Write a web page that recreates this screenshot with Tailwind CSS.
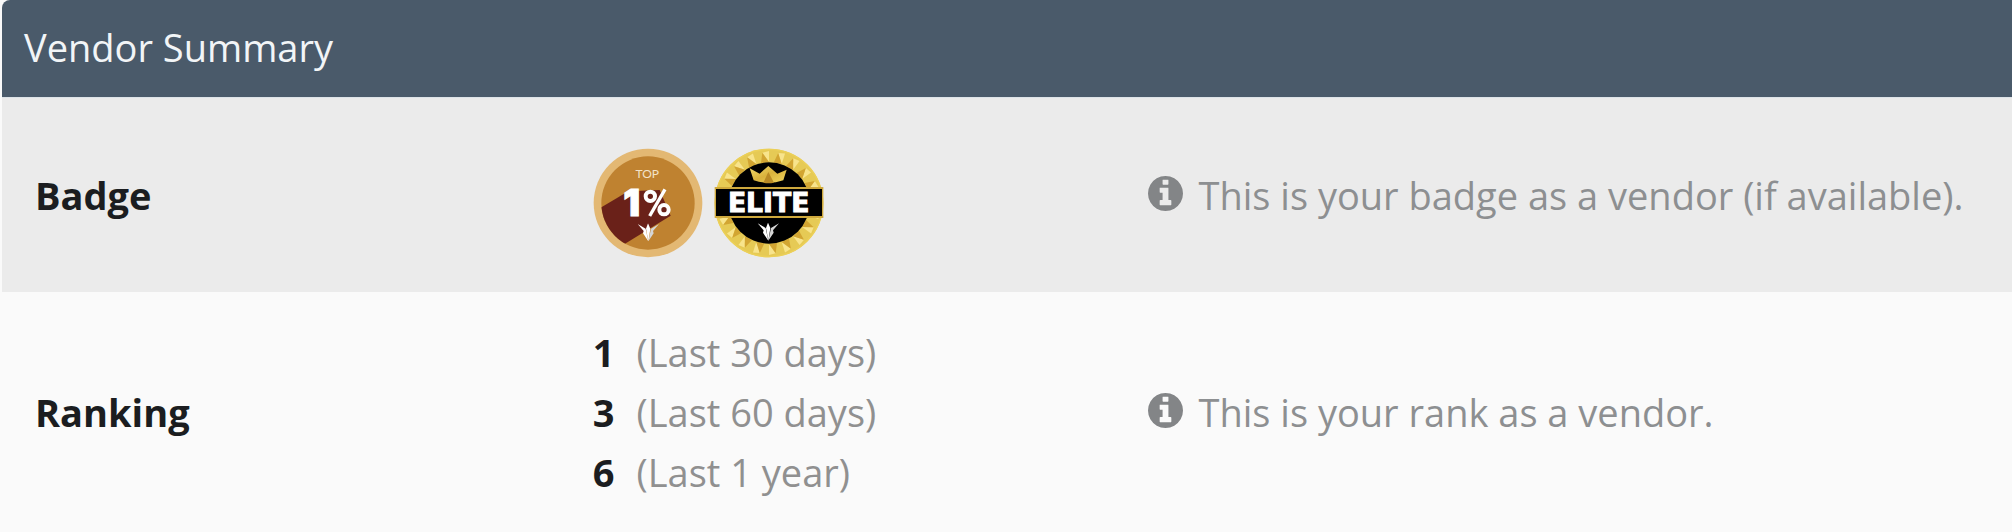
<!DOCTYPE html>
<html lang="en">
<head>
    <meta charset="UTF-8">
    <meta name="viewport" content="width=device-width, initial-scale=1.0">
    <title>Vendor Summary</title>
    <script src="https://cdn.jsdelivr.net/npm/@tailwindcss/browser@4"></script>
</head>
<body class="bg-[#fafafa] font-['Open_Sans','Noto_Sans',sans-serif] text-[38px] leading-[60px] text-[#1b1d20]">
    <!-- Shared shapes -->
    <svg class="hidden" aria-hidden="true">
        <symbol id="icon-info" viewBox="0 128 1536 1536">
            <path fill="currentColor" d="M1024 1376v-160q0-14-9-23t-23-9h-96v-512q0-14-9-23t-23-9h-320q-14 0-23 9t-9 23v160q0 14 9 23t23 9h96v320h-96q-14 0-23 9t-9 23v160q0 14 9 23t23 9h448q14 0 23-9t9-23zm-128-896v-160q0-14-9-23t-23-9h-192q-14 0-23 9t-9 23v160q0 14 9 23t23 9h192q14 0 23-9t9-23zm640 416q0 209-103 385.5t-279.5 279.5-385.5 103-385.5-103-279.5-279.5-103-385.5 103-385.5 279.5-279.5 385.5-103 385.5 103 279.5 279.5 103 385.5z"/>
        </symbol>
        <symbol id="badge-mark" viewBox="0 0 64 56">
            <path fill="#fff" d="M0 2L24 16 32 54 16 30 18 23z"/>
            <path fill="#d5d5d5" d="M64 2L40 16 32 54 48 30 46 23z"/>
            <path fill="#fff" d="M31 0L38 16 32 54 25 16z"/>
        </symbol>
    </svg>

    <main class="ml-0.5">
        <h1 class="rounded-tl-lg bg-[#4a5a6a] px-[22px] pt-[17px] pb-5 text-[#f2f5f7]">Vendor Summary</h1>

        <table class="w-full table-fixed border-t border-[#dde3e8] text-left">
            <colgroup>
                <col class="w-[27.6%]">
                <col class="w-[27.6%]">
                <col>
            </colgroup>
            <tbody>
                <!-- Badge -->
                <tr class="bg-[#ebebeb]">
                    <th scope="row" class="px-[33px] font-bold">Badge</th>
                    <td class="px-9 pt-[50px] pb-[34px]">
                        <div class="flex gap-[11px]">
                            <svg class="size-[110px] shrink-0" viewBox="0 0 330 330" role="img" aria-label="Top 1%">
                                <clipPath id="top-face"><circle cx="165" cy="165" r="140"/></clipPath>
                                <circle cx="165" cy="165" r="163" fill="#e3b873"/>
                                <circle cx="165" cy="165" r="140" fill="#bf8230"/>
                                <path clip-path="url(#top-face)" fill="#6a2119" d="M10 187L106 130 200 126 233 203 96 287 20 290z"/>
                                <text x="163" y="90" text-anchor="middle" font-family="Lato" font-size="36" fill="#f3e3c8">TOP</text>
                                <text x="91" y="204" font-family="Inter" font-size="112" font-weight="900" fill="#fff" stroke="#fff" stroke-width="3">1</text>
                                <g fill="none" stroke="#fff">
                                    <circle cx="172" cy="145" r="14" stroke-width="12"/>
                                    <circle cx="213" cy="185" r="14" stroke-width="12"/>
                                    <path stroke-width="10" d="M216 124L170 204"/>
                                </g>
                                <use href="#badge-mark" x="134" y="226" width="64" height="56"/>
                            </svg>
                            <svg class="size-[110px] shrink-0" viewBox="0 0 330 330" role="img" aria-label="Elite">
                                <defs>
                                    <linearGradient id="gold" x1="0" y1="0" x2="1" y2="1">
                                        <stop offset="0" stop-color="#f3dc6c"/>
                                        <stop offset=".5" stop-color="#d9b23c"/>
                                        <stop offset="1" stop-color="#f0d65e"/>
                                    </linearGradient>
                                    <g id="facet">
                                        <path fill="#f8e48c" d="M165 42L145 14 165 9z"/>
                                        <path fill="#d2a532" d="M165 42L145 14 141 45z"/>
                                    </g>
                                </defs>
                                <circle cx="165" cy="165" r="163" fill="#e6ca55"/>
                                <!-- Faceted rim -->
                                <use href="#facet"/>
                                <use href="#facet" transform="rotate(18 165 165)"/>
                                <use href="#facet" transform="rotate(36 165 165)"/>
                                <use href="#facet" transform="rotate(54 165 165)"/>
                                <use href="#facet" transform="rotate(72 165 165)"/>
                                <use href="#facet" transform="rotate(108 165 165)"/>
                                <use href="#facet" transform="rotate(126 165 165)"/>
                                <use href="#facet" transform="rotate(144 165 165)"/>
                                <use href="#facet" transform="rotate(162 165 165)"/>
                                <use href="#facet" transform="rotate(180 165 165)"/>
                                <use href="#facet" transform="rotate(198 165 165)"/>
                                <use href="#facet" transform="rotate(216 165 165)"/>
                                <use href="#facet" transform="rotate(234 165 165)"/>
                                <use href="#facet" transform="rotate(252 165 165)"/>
                                <use href="#facet" transform="rotate(288 165 165)"/>
                                <use href="#facet" transform="rotate(306 165 165)"/>
                                <use href="#facet" transform="rotate(324 165 165)"/>
                                <use href="#facet" transform="rotate(342 165 165)"/>
                                <circle cx="165" cy="165" r="161" fill="none" stroke="#ecd058" stroke-width="4"/>
                                <circle cx="165" cy="165" r="122" fill="#000"/>
                                <rect x="2" y="117" width="326" height="93" fill="#cfa93d"/>
                                <rect x="6" y="123" width="318" height="81" fill="#000"/>
                                <path fill="url(#gold)" d="M107 61L137 77 163 54 190 77 218 65 208 97Q163 112 119 97z"/>
                                <path fill="#b98a25" d="M163 72L180 104Q163 108 148 104z"/>
                                <text x="164" y="192" text-anchor="middle" font-family="DejaVu Sans" font-size="80" font-weight="700" fill="#fff" stroke="#fff" stroke-width="3">ELITE</text>
                                <use href="#badge-mark" x="131" y="224" width="64" height="56"/>
                            </svg>
                        </div>
                    </td>
                    <td class="pl-9 whitespace-nowrap text-[#8d8f91]">
                        <div class="flex items-center gap-4">
                            <svg class="mb-1 size-[35px] shrink-0 text-[#838587]" aria-hidden="true"><use href="#icon-info"/></svg>
                            <span>This is your badge as a vendor (if available).</span>
                        </div>
                    </td>
                </tr>

                <!-- Ranking -->
                <tr class="bg-[#fafafa]">
                    <th scope="row" class="px-[33px] font-bold">Ranking</th>
                    <td class="px-9 py-[30px] text-[#909090]">
                        <ul>
                            <li class="flex gap-[22px]"><b class="text-[#1b1d20]">1</b>(Last 30 days)</li>
                            <li class="flex gap-[22px]"><b class="text-[#1b1d20]">3</b>(Last 60 days)</li>
                            <li class="flex gap-[22px]"><b class="text-[#1b1d20]">6</b>(Last 1 year)</li>
                        </ul>
                    </td>
                    <td class="pl-9 whitespace-nowrap text-[#8d8f91]">
                        <div class="flex items-center gap-4">
                            <svg class="mb-1 size-[35px] shrink-0 text-[#838587]" aria-hidden="true"><use href="#icon-info"/></svg>
                            <span>This is your rank as a vendor.</span>
                        </div>
                    </td>
                </tr>
            </tbody>
        </table>
    </main>
</body>
</html>
